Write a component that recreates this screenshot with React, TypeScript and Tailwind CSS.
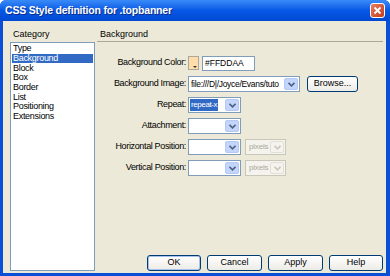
import React from "react";

const font = { fontFamily: '"Liberation Sans", Arial, sans-serif' };

function Arrow({ disabled }: { disabled?: boolean }) {
  return (
    <div
      className={
        "w-[14px] h-full flex items-center justify-center rounded-[2px] border " +
        (disabled ? "bg-[#F4F3EE] border-[#E2E0D6]" : "bg-[#C4D5FB] border-[#B4C8F5]")
      }
    >
      <svg width="7" height="5" viewBox="0 0 7 5">
        <path d="M0.5 0.8 L3.5 3.8 L6.5 0.8" fill="none" stroke={disabled ? "#C9C7BA" : "#4D6185"} strokeWidth="1.6" />
      </svg>
    </div>
  );
}

function Combo({ w, children, disabled }: { w: string; children?: React.ReactNode; disabled?: boolean }) {
  return (
    <div
      className={
        "h-[16px] flex items-stretch border p-[1px] " +
        w +
        (disabled ? " border-[#C9C7BA] bg-[#F4F3EE]" : " border-[#7F9DB9] bg-white")
      }
    >
      <div className="flex-1 flex items-center overflow-hidden whitespace-nowrap text-[8.5px] leading-none">{children}</div>
      <Arrow disabled={disabled} />
    </div>
  );
}

function Btn({ label, w, def }: { label: string; w: string; def?: boolean }) {
  return (
    <div
      className={
        "h-[16px] flex items-center justify-center rounded-[3px] border border-[#003C74] bg-gradient-to-b from-white to-[#ECEBE6] text-[9px] text-black " +
        w +
        (def ? " shadow-[inset_0_0_0_1px_#A7C2EE]" : "")
      }
    >
      {label}
    </div>
  );
}

function Row({ label, children }: { label: string; children: React.ReactNode }) {
  return (
    <div className="h-[16px] flex items-center">
      <div className="w-[91px] text-right text-[9px] tracking-[-0.35px] pr-[2px]">{label}</div>
      <div className="flex items-center">{children}</div>
    </div>
  );
}

export default function App() {
  const cats = ["Type", "Background", "Block", "Box", "Border", "List", "Positioning", "Extensions"];
  return (
    <div style={font} className="w-[390px] h-[276px] flex flex-col bg-[#0A4FD8] overflow-hidden rounded-t-[6px]">
      <div className="h-[21px] flex items-center justify-between bg-gradient-to-b from-[#3A8BF8] via-[#0757E6] to-[#0249D2] pl-[5px] pr-[5px]">
        <span className="text-white font-bold text-[10.5px] tracking-[-0.2px] [text-shadow:1px_1px_0_#0A2C8A]">
          CSS Style definition for .topbanner
        </span>
        <div className="w-[15px] h-[15px] rounded-[3px] border border-white bg-gradient-to-br from-[#E97C5E] to-[#C4391A] flex items-center justify-center">
          <svg width="9" height="9" viewBox="0 0 9 9">
            <path d="M1.5 1.5 L7.5 7.5 M7.5 1.5 L1.5 7.5" stroke="white" strokeWidth="1.8" />
          </svg>
        </div>
      </div>
      <div className="flex-1 mx-[3px] mr-[4px] mb-[3px] bg-[#ECE9D8] flex text-black">
        <div className="ml-[7px] w-[85px] flex flex-col">
          <div className="pt-[8px] pl-[3px] h-[21px] text-[9px] leading-[10px]">Category</div>
          <div className="flex-1 mb-[2px] bg-white border border-[#7F9DB9] pt-[1px] px-[1px]">
            {cats.map((c) => (
              <div
                key={c}
                className={
                  "h-[9.7px] flex items-center pl-[1px] text-[9px] tracking-[-0.3px] leading-none " +
                  (c === "Background" ? "bg-[#316AC5] text-white" : "")
                }
              >
                {c}
              </div>
            ))}
          </div>
        </div>
        <div className="ml-[2px] mr-[3px] flex-1 flex flex-col">
          <div className="pt-[8px] pl-[3px] h-[21px] text-[9px] leading-[10px] border-b border-[#ACA899]">Background</div>
          <div className="mt-[13px] flex flex-col gap-[5px]">
            <Row label="Background Color:">
              <div className="w-[11px] h-[14px] border border-[#ACA899] bg-[#FFDDAA] relative">
                <div className="absolute right-[1px] bottom-[1px] w-0 h-0 border-l-[2px] border-r-[2px] border-t-[2px] border-l-transparent border-r-transparent border-t-[#333]" />
              </div>
              <div className="ml-[3px] w-[53px] h-[15px] border border-[#7F9DB9] bg-white flex items-center pl-[2px] text-[8.5px]">
                #FFDDAA
              </div>
            </Row>
            <Row label="Background Image:">
              <Combo w="w-[112px]">
                <span className="pl-[1px] tracking-[-0.3px]">file:///D|/Joyce/Evans/tuto</span>
              </Combo>
              <div className="ml-[7px]">
                <Btn label="Browse..." w="w-[51px]" />
              </div>
            </Row>
            <Row label="Repeat:">
              <Combo w="w-[53px]">
                <span className="bg-[#316AC5] text-white px-[1px] h-full flex items-center text-[8px] tracking-[-0.4px]">repeat-x</span>
              </Combo>
            </Row>
            <Row label="Attachment:">
              <Combo w="w-[53px]" />
            </Row>
            <Row label="Horizontal Position:">
              <Combo w="w-[53px]" />
              <div className="ml-[4px]">
                <Combo w="w-[41px]" disabled>
                  <span className="pl-[2px] text-[#ACA899] text-[8px] tracking-[-0.2px]">pixels</span>
                </Combo>
              </div>
            </Row>
            <Row label="Vertical Position:">
              <Combo w="w-[53px]" />
              <div className="ml-[4px]">
                <Combo w="w-[41px]" disabled>
                  <span className="pl-[2px] text-[#ACA899] text-[8px] tracking-[-0.2px]">pixels</span>
                </Combo>
              </div>
            </Row>
          </div>
          <div className="flex-1" />
          <div className="flex justify-end gap-[6px] mb-[2px]">
            <Btn label="OK" w="w-[54px]" def />
            <Btn label="Cancel" w="w-[55px]" />
            <Btn label="Apply" w="w-[55px]" />
            <Btn label="Help" w="w-[54px]" />
          </div>
        </div>
      </div>
    </div>
  );
}
